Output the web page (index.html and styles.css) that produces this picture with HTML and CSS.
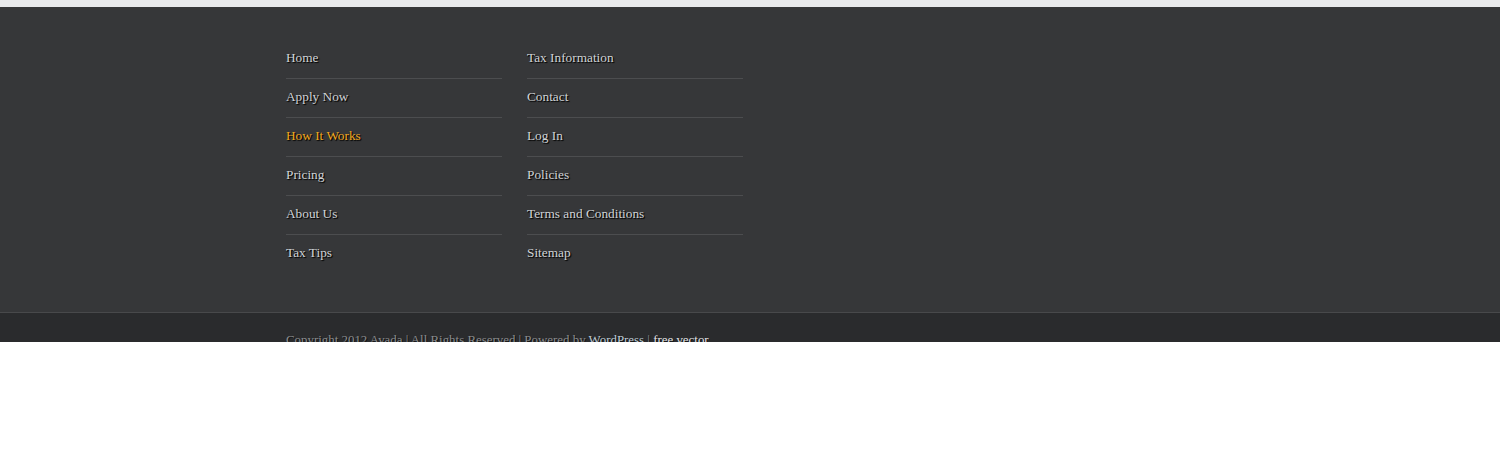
FILE: index.html
```html
<!DOCTYPE html>
<html>
<head>
<meta charset="utf-8">
<link rel="stylesheet" href="styles.css">
</head>
<body>
<div class="topstrip"></div>
<footer class="footer">
  <div class="inner cols">
    <ul class="menu">
      <li><a href="#">Home</a></li>
      <li><a href="#">Apply Now</a></li>
      <li><a href="#" class="active">How It Works</a></li>
      <li><a href="#">Pricing</a></li>
      <li><a href="#">About Us</a></li>
      <li><a href="#">Tax Tips</a></li>
    </ul>
    <ul class="menu">
      <li><a href="#">Tax Information</a></li>
      <li><a href="#">Contact</a></li>
      <li><a href="#">Log In</a></li>
      <li><a href="#">Policies</a></li>
      <li><a href="#">Terms and Conditions</a></li>
      <li><a href="#">Sitemap</a></li>
    </ul>
  </div>
</footer>
<div class="copyright">
  <div class="inner">
    <p>Copyright 2012 Avada | All Rights Reserved | Powered by <a href="#" class="wp">WordPress</a> | <a href="#" class="fv">free vector</a></p>
  </div>
</div>
</body>
</html>
```
FILE: styles.css
```css
html, body {
  margin: 0;
  padding: 0;
  background: #ffffff;
}
body {
  font-family: "Liberation Serif", "Times New Roman", serif;
}
.topstrip {
  height: 7px;
  background: #e9eaec;
}
.footer {
  background: #363739;
  padding: 33px 0 39px;
}
.inner {
  margin-left: 286px;
}
.cols {
  display: flex;
  gap: 25px;
}
.menu {
  list-style: none;
  margin: 0;
  padding: 0;
  width: 216px;
}
.menu li {
  padding: 9px 0 11px;
  line-height: 18px;
  font-size: 13.3px;
  border-bottom: 1px solid #4c4d4f;
}
.menu li:last-child {
  border-bottom: none;
}
.menu a {
  color: #d0d3d7;
  text-decoration: none;
  text-shadow: 1px 1px 0 #111, 1px 1px 1px #000;
}
.menu a.active {
  color: #f0a820;
}
.copyright {
  background: #2a2b2d;
  border-top: 1px solid #48494b;
  height: 29px;
  overflow: hidden;
}
.copyright p {
  margin: 0;
  padding-top: 19px;
  font-size: 12.9px;
  line-height: 16px;
  color: #8a8c8e;
  text-shadow: 1px 1px 0 #111;
}
.copyright a {
  text-decoration: none;
}
.copyright a.wp {
  color: #bfcbd6;
}
.copyright a.fv {
  color: #e2e4e6;
}
```
